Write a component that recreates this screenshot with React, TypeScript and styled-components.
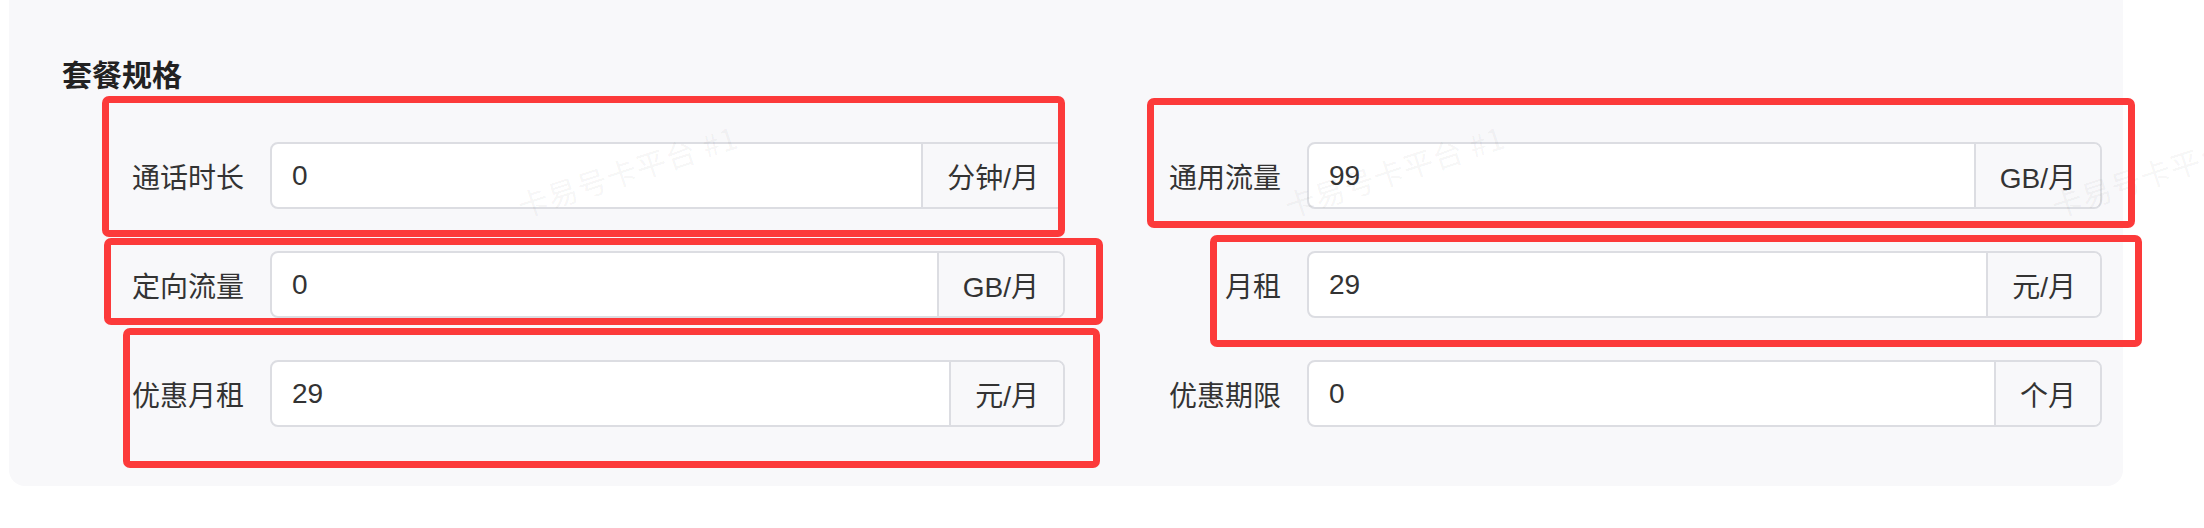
import React from "react";
import styled, {createGlobalStyle} from "styled-components";

const GlobalStyle = createGlobalStyle`
  html, body {
    margin: 0;
    padding: 0;
    background: #ffffff;
  }
  body {
    font-family: "Liberation Sans", "Noto Sans CJK SC", sans-serif;
    color: #333333;
  }
  * {
    box-sizing: border-box;
  }
`;

const Page = styled.div`
  position: relative;
  width: 2204px;
  height: 528px;
  overflow: hidden;
`;

const Panel = styled.section`
  margin-left: 9px;
  width: 2114px;
  background-color: #f8f8fa;
  border-radius: 0 0 16px 16px;
  padding: 55px 0 59px 53px;
`;

const Title = styled.h3`
  margin: 0;
  font-size: 30px;
  line-height: 42px;
  font-weight: 600;
  color: #222222;
`;

const FormGrid = styled.div`
  display: grid;
  grid-template-columns: 935px 935px;
  column-gap: 102px;
  row-gap: 42px;
  margin-top: 45px;
  margin-left: 68px;
`;

const FormItem = styled.div`
  display: flex;
  align-items: center;
`;

const Label = styled.label`
  width: 140px;
  flex-shrink: 0;
  padding-right: 26px;
  text-align: right;
  font-size: 28px;
  color: #333333;
  white-space: nowrap;
`;

const InputGroup = styled.div`
  flex: 1;
  display: flex;
  height: 67px;
  border: 2px solid #dcdde2;
  border-radius: 8px;
  overflow: hidden;
  background-color: #ffffff;
`;

const Field = styled.input`
  flex: 1;
  min-width: 0;
  border: none;
  outline: none;
  padding: 0 20px;
  background: transparent;
  font-family: "Liberation Sans", "Noto Sans CJK SC", sans-serif;
  font-size: 28px;
  color: #333333;
`;

const Addon = styled.span`
  display: flex;
  align-items: center;
  padding: 0 24px;
  border-left: 2px solid #dcdde2;
  background-color: #f8f8fa;
  font-size: 28px;
  color: #333333;
  white-space: nowrap;
`;

// annotation overlay (red rectangles drawn over the screenshot)
const MarkLayer = styled.div`
  position: absolute;
  inset: 0;
  pointer-events: none;
`;

const RedBox = styled.div<{ $x: number; $y: number; $w: number; $h: number }>`
  position: absolute;
  left: ${p => p.$x}px;
  top: ${p => p.$y}px;
  width: ${p => p.$w}px;
  height: ${p => p.$h}px;
  border: 7px solid #fc3a3a;
  border-radius: 7px;
`;

const WatermarkLayer = styled.div`
  position: absolute;
  top: 190px;
  left: 0;
  display: flex;
  padding-left: 523px;
  pointer-events: none;
`;

const Watermark = styled.div`
  width: 767px;
  flex-shrink: 0;
  font-family: "Noto Sans CJK SC", sans-serif;
  font-size: 30px;
  line-height: 30px;
  letter-spacing: 1px;
  color: rgba(0, 0, 0, 0.05);
  white-space: nowrap;
  transform: rotate(-18deg);
  transform-origin: 0 100%;
`;

const fields = [
    {label: "通话时长", value: "0", unit: "分钟/月"},
    {label: "通用流量", value: "99", unit: "GB/月"},
    {label: "定向流量", value: "0", unit: "GB/月"},
    {label: "月租", value: "29", unit: "元/月"},
    {label: "优惠月租", value: "29", unit: "元/月"},
    {label: "优惠期限", value: "0", unit: "个月"},
];

const marks = [
    {x: 102, y: 96, w: 963, h: 141},
    {x: 104, y: 238, w: 999, h: 87},
    {x: 123, y: 328, w: 977, h: 140},
    {x: 1147, y: 98, w: 988, h: 130},
    {x: 1210, y: 235, w: 932, h: 112},
];

export default function App() {
    return (
        <Page>
            <GlobalStyle/>
            <Panel>
                <Title>套餐规格</Title>
                <FormGrid>
                    {fields.map(f => (
                        <FormItem key={f.label}>
                            <Label>{f.label}</Label>
                            <InputGroup>
                                <Field defaultValue={f.value}/>
                                <Addon>{f.unit}</Addon>
                            </InputGroup>
                        </FormItem>
                    ))}
                </FormGrid>
            </Panel>
            <WatermarkLayer>
                {[0, 1, 2].map(i => (
                    <Watermark key={i}>卡易号卡平台 #1</Watermark>
                ))}
            </WatermarkLayer>
            <MarkLayer>
                {marks.map((m, i) => (
                    <RedBox key={i} $x={m.x} $y={m.y} $w={m.w} $h={m.h}/>
                ))}
            </MarkLayer>
        </Page>
    );
}
